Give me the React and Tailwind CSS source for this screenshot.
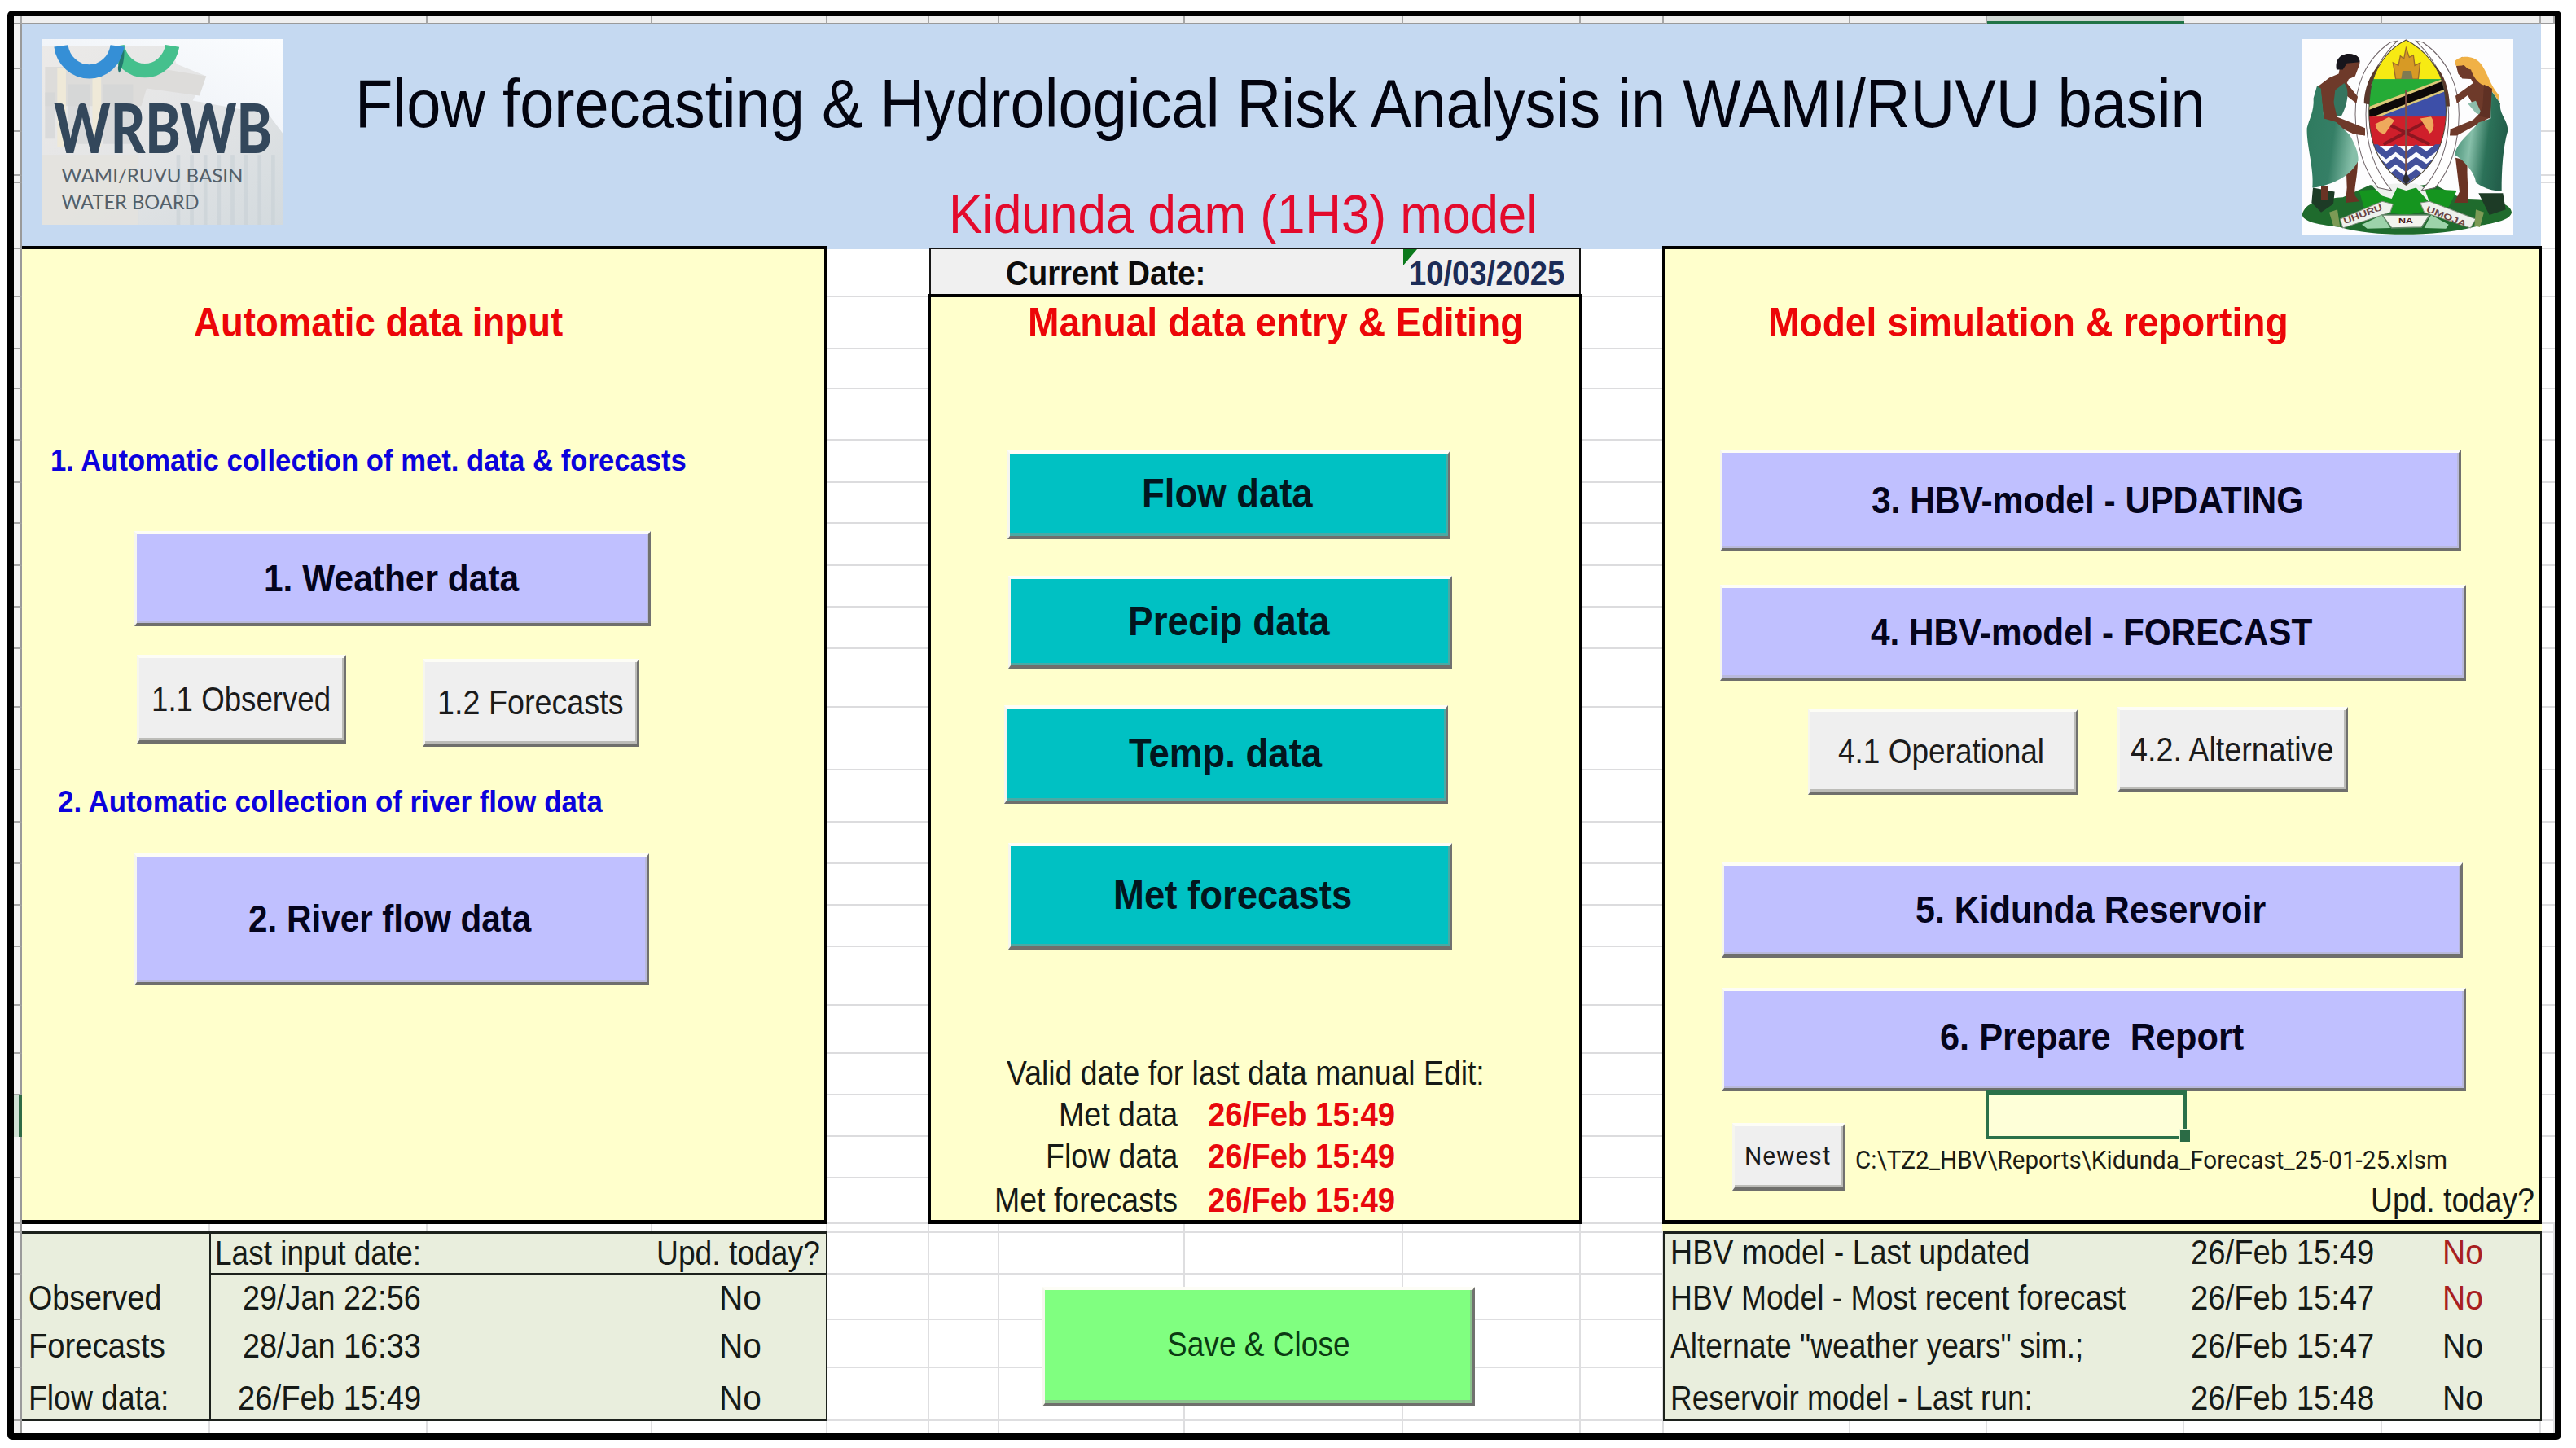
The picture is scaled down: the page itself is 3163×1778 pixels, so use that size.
import { useLayoutEffect, useRef, useState } from "react";

const COLS =
  "grid-cols-[10px_231px_267px_276px_215px_125px_86px_228px_268px_218px_102px_229px_168px_242px_243px_195px_17px]";
const ROWS =
  "grid-rows-[10px_55px_77px_54px_9px_81px_59px_64px_49px_63px_52px_50px_52px_51px_51px_72px_77px_64px_51px_51px_51px_72px_59px_51px_51px_51px_56px_11px_51px_56px_59px_65px_16px]";
const COL_COUNT = 17;
const ROW_COUNT = 33;
const SELECTED_COL = 13;
const SELECTED_ROW = 24;

function cellClass(row, col) {
  if (row === 0) {
    return col === SELECTED_COL
      ? "bg-[#cfd6d2] border-b-4 border-[#217346]"
      : "bg-[#efefef] border-b-2 border-r-2 border-b-[#9a9a9a] border-r-[#a6a6a6]";
  }
  if (col === 0) {
    return row === SELECTED_ROW
      ? "bg-[#cfe0d4] border-r-4 border-[#2f6b45]"
      : "bg-[#f3f3f3] border-b-2 border-r-2 border-b-[#a6a6a6] border-r-[#9a9a9a]";
  }
  return row >= 27
    ? "border-b-2 border-r-2 border-[#dedee0]"
    : "border-b-2 border-[#dcdcde]";
}

function Cells() {
  const cells = [];
  for (let r = 0; r < ROW_COUNT; r++)
    for (let c = 0; c < COL_COUNT; c++)
      cells.push(<div key={r + "-" + c} className={cellClass(r, c)} />);
  return <div className={"col-start-1 row-start-1 grid " + COLS + " " + ROWS}>{cells}</div>;
}

/* One line of text, stretched horizontally to the width of its box. */
function Fit({ className, children }) {
  const box = useRef(null);
  const line = useRef(null);
  const [scale, setScale] = useState(1);
  useLayoutEffect(() => {
    setScale(box.current.clientWidth / line.current.offsetWidth);
  }, []);
  return (
    <div ref={box} className={"shrink-0 whitespace-pre " + className}>
      <span ref={line} className="inline-block origin-left" style={{ transform: `scaleX(${scale})` }}>
        {children}
      </span>
    </div>
  );
}

const BEVEL =
  "shrink-0 flex items-center justify-center border-t-[4px] border-l-[3px] border-r-[3px] border-b-[4px] border-t-[#fdfdf6] border-l-[#f6f6ee] border-r-[#71716f] border-b-[#6f6f6c] ";
const PURPLE = BEVEL + "bg-[#c0c0ff] shadow-[inset_-2px_-3px_0_#b9b9dc] ";
const TEAL = BEVEL + "bg-[#00c1c3] shadow-[inset_-2px_-3px_0_#4ba9a4] ";
const GRAY = BEVEL + "bg-[#efefef] shadow-[inset_-2px_-3px_0_#bcbcb8] ";
const BOLD = "font-bold text-[46px] leading-[50px] h-[52px] text-[#04041c] ";
const TEALTXT = "font-bold text-[50px] leading-[50px] h-[53px] text-[#02161e] ";
const SMALL = "text-[43px] leading-[50px] h-[52px] text-[#1b1b1b] ";
const CELL = "text-[43px] leading-[50px] h-[52px] text-[#161a16] ";
const TITLE = "font-bold text-[50px] leading-[60px] h-[60px] text-[#ec0608] ";
const BLUE = "font-bold text-[36px] leading-[40px] h-[40px] text-[#0c02dc] ";

function WaterBoardLogo() {
  return (
    <svg className="mt-[18px] ml-[25px] h-[228px] w-[295px] shrink-0 overflow-visible" viewBox="65 53 887 685" preserveAspectRatio="none">
      <defs>
        <linearGradient id="wall" x1="0" y1="0" x2="1" y2="1">
          <stop offset="0" stopColor="#eceae8" />
          <stop offset="0.5" stopColor="#e4e5e6" />
          <stop offset="1" stopColor="#d3dade" />
        </linearGradient>
        <linearGradient id="sky" x1="0" y1="1" x2="1" y2="0">
          <stop offset="0" stopColor="#e9edf3" />
          <stop offset="1" stopColor="#fbfdff" />
        </linearGradient>
      </defs>
      <rect x="65" y="53" width="887" height="685" fill="url(#wall)" />
      <path d="M65 53H952V400L900 330L620 280L670 190L560 145L540 80H65Z" fill="url(#sky)" />
      <path d="M75 155H460L670 190L645 262L450 235L430 300H75Z" fill="#dddcda" />
      <path d="M120 160h32v290h-32zM250 160h32v290h-32z" fill="#efe9d8" />
      <path d="M75 250h38v170h-38zM160 220h80v220h-80zM290 220h110v220h-110z" fill="#d3d4d6" opacity=".7" />
      <path d="M65 480H420V738H65Z" fill="#e4e2dd" opacity=".8" />
      {[560, 610, 660, 710, 760, 810, 860, 910].map((x) => (
        <rect key={x} x={x} y="480" width="14" height="258" fill="#c8d0d6" opacity=".6" />
      ))}
      <path d="M342 78A103 110 0 0 0 545 78" fill="none" stroke="#45c08d" strokeWidth="52" />
      <path d="M134 78A105 110 0 0 0 342 78" fill="none" stroke="#358fd6" strokeWidth="52" />
      <path d="M367 90C369 125 362 152 350 178C338 165 345 140 367 90Z" fill="#23776f" />
      <text x="108" y="475" textLength="805" lengthAdjust="spacingAndGlyphs" fontFamily="Lato" fontWeight="900" fontSize="250" fill="#33475b">WRBWB</text>
      <text x="136" y="583" textLength="670" lengthAdjust="spacingAndGlyphs" fontFamily="Lato" fontSize="72" fill="#535f69">WAMI/RUVU BASIN</text>
      <text x="136" y="682" textLength="508" lengthAdjust="spacingAndGlyphs" fontFamily="Lato" fontSize="74" fill="#535f69">WATER BOARD</text>
    </svg>
  );
}

function CoatOfArms() {
  return (
    <svg className="mt-[18px] mr-[34px] h-[241px] w-[260px] shrink-0" viewBox="48 53 780 722" preserveAspectRatio="none">
      <defs>
        <clipPath id="shield">
          <path d="M433 56C500 90 560 160 574 240C590 340 575 430 530 500C500 545 465 570 433 590C400 570 365 540 335 490C295 420 290 330 302 240C315 160 365 90 433 56Z" />
        </clipPath>
        <linearGradient id="skirtL" x1="0" x2="1" y1="0" y2=".25">
          <stop offset="0" stopColor="#2e7a5e" />
          <stop offset=".6" stopColor="#357f66" />
          <stop offset="1" stopColor="#86bfa9" />
        </linearGradient>
        <linearGradient id="skirtR" x1="0" x2="1" y1="0" y2=".25">
          <stop offset="0" stopColor="#2f7d62" />
          <stop offset=".4" stopColor="#86bfa9" />
          <stop offset=".7" stopColor="#2c7259" />
          <stop offset="1" stopColor="#235f4b" />
        </linearGradient>
      </defs>
      <rect x="48" y="53" width="780" height="722" fill="#fdfdfe" />
      <path d="M50 700C60 650 130 640 200 635L300 590L433 600L530 585L640 640C740 640 815 650 822 690C815 725 740 730 680 745C560 775 330 785 190 745C120 735 60 730 50 700Z" fill="#1f6b2d" />
      <path d="M260 610L433 600L620 610L590 670L433 700L280 680Z" fill="#15951f" />
      <path d="M90 600L170 615L165 660L120 690L85 655ZM700 620L790 620L800 680L740 700Z" fill="#1d3b26" />
      <path d="M305 590L345 630L380 640L400 600L433 610L470 600L520 655L500 600L470 585H400Z" fill="#eef1ee" />
      {/* tusks */}
      <path d="M375 65C280 130 245 230 246 330C248 440 275 530 330 600L380 610C320 540 285 450 285 330C285 220 320 140 400 60Z" fill="#fff" stroke="#6f6468" strokeWidth="3" />
      <path d="M495 65C590 130 628 230 628 330C626 440 600 530 540 600L490 610C555 540 592 450 590 330C588 220 550 140 470 60Z" fill="#fff" stroke="#6f6468" strokeWidth="3" />
      <path d="M335 145C300 180 278 240 278 290L302 295L305 220ZM535 145C575 180 592 240 594 300L574 300L568 220Z" fill="#5a382b" />
      <g clipPath="url(#shield)">
        <rect x="280" y="50" width="310" height="150" fill="#f7ea13" />
        <path d="M395 200L385 140L405 150L412 115L425 125L433 85L445 120L460 112L465 150L485 140L478 200Z" fill="#d79a25" stroke="#9a6a2a" strokeWidth="4" />
        <path d="M415 200L420 170H452L458 200Z" fill="#7f7a52" />
        <rect x="280" y="200" width="310" height="140" fill="#25ab36" />
        <path d="M280 345L590 220V345Z" fill="#3d4fa8" />
        <path d="M280 308L575 197L590 240L300 352Z" fill="#dcc878" />
        <path d="M280 320L575 205L590 232L300 343Z" fill="#0c0808" />
        <rect x="280" y="338" width="310" height="108" fill="#cf1f2b" />
        <path d="M350 440L510 355M520 440L365 365" stroke="#8b1620" strokeWidth="12" />
        <path d="M320 365L370 340L390 352L355 402C335 400 322 385 320 365ZM485 345L525 338C540 360 538 390 520 400Z" fill="#efa95c" />
        <rect x="280" y="446" width="310" height="150" fill="#fafbff" />
        {[452, 498, 544].map((y) => (
          <path
            key={y}
            d={`M280 ${y}L325 ${y}L360 ${y + 28}L395 ${y + 2}L433 ${y + 30}L470 ${y + 2}L508 ${y + 28}L545 ${y}L590 ${y}`}
            fill="none"
            stroke="#42509b"
            strokeWidth="23"
          />
        ))}
        <path d="M433 240V590" stroke="#7c5147" strokeWidth="7" />
        <path d="M433 540L420 570L433 590L447 570Z" fill="#2d2d31" />
      </g>
      <path d="M433 56C500 90 560 160 574 240C590 340 575 430 530 500C500 545 465 570 433 590C400 570 365 540 335 490C295 420 290 330 302 240C315 160 365 90 433 56Z" fill="none" stroke="#4b4433" strokeWidth="3" />
      {/* left supporter */}
      <path d="M212 520L255 500C255 560 240 600 245 630L262 650L210 655L215 600ZM120 595h25v50h-25z" fill="#6a3324" />
      <path d="M190 150C180 120 200 108 225 108C255 110 265 125 262 145L245 190L222 200L215 215L255 265L250 290L200 250L185 300L180 340L282 380V408L240 402L130 350L118 250L105 230L150 195L185 180Z" fill="#6e3a2a" />
      <path d="M177 165C170 125 195 107 222 107C250 108 264 120 262 138L215 142L200 165Z" fill="#17151c" />
      <path d="M105 225L120 235L130 345L175 358L225 405C245 440 258 470 257 500C235 550 170 590 88 600C95 530 65 440 68 380C75 350 95 320 92 270Z" fill="url(#skirtL)" />
      <path d="M172 240L205 215C225 235 220 290 195 335L160 338Z" fill="#35755f" />
      <path d="M120 235C125 290 130 320 132 345L165 350L240 402L280 407L275 380L180 345L160 260L150 215Z" fill="#6e3a2a" />
      {/* right supporter */}
      <path d="M615 490L660 500C655 560 665 600 660 655H610L630 615Z" fill="#6a3324" />
      <path d="M615 140L640 118L690 150L750 235L745 340L620 408L594 408L596 385L680 350L700 330L660 260L620 290L615 262L680 215L672 200L640 198L625 180Z" fill="#6e3a2a" />
      <path d="M613 135C630 112 680 112 705 140C735 175 735 210 775 260L778 285L735 225C700 225 680 190 672 165C655 165 650 145 640 150L618 152Z" fill="#f0b146" />
      <path d="M745 240L780 290C775 330 808 350 808 390C790 450 785 530 785 612C750 612 715 600 690 580C690 550 640 490 612 480C620 430 670 400 700 360L745 345Z" fill="url(#skirtR)" />
      <path d="M660 290L690 280L715 335L690 325Z" fill="#8dbdab" />
      <path d="M720 220L750 235L742 345L700 335L715 300Z" fill="#5f3124" />
      {/* banner */}
      <path d="M190 715L345 650L385 660L375 690L200 748Z" fill="#eef1ec" stroke="#7e8d7c" strokeWidth="3" />
      <path d="M485 655L520 650L690 715L670 748L500 690Z" fill="#eef1ec" stroke="#7e8d7c" strokeWidth="3" />
      <path d="M270 735L345 700L375 748L290 750ZM590 735L525 700L500 748L580 750Z" fill="#9dd3aa" />
      <path d="M345 700L520 700L490 745L380 748Z" fill="#f3f4ee" stroke="#65876a" strokeWidth="4" />
      <path d="M150 690L180 680L190 745L165 740ZM690 680L720 690L705 745L685 740Z" fill="#7c9a55" />
      <text x="405" y="731" textLength="54" lengthAdjust="spacingAndGlyphs" fontFamily="Liberation Sans" fontWeight="700" fontSize="26" fill="#4a1c1c">NA</text>
      <text transform="rotate(-21 205 735)" x="208" y="735" textLength="150" lengthAdjust="spacingAndGlyphs" fontFamily="Liberation Sans" fontWeight="700" fontSize="32" fill="#6a4343">UHURU</text>
      <text transform="rotate(22 500 680)" x="508" y="684" textLength="155" lengthAdjust="spacingAndGlyphs" fontFamily="Liberation Sans" fontWeight="700" fontSize="32" fill="#6a4343">UMOJA</text>
    </svg>
  );
}

function Header() {
  return (
    <header className="flex h-[276px] w-[3093px] shrink-0 bg-[#c5d9f1]">
      <WaterBoardLogo />
      <div className="ml-[89px] flex grow flex-col">
        <Fit className="mt-[53px] h-[90px] w-[2272px] text-[83px] leading-[90px] text-[#03040f]">
          Flow forecasting &amp; Hydrological Risk Analysis in WAMI/RUVU basin
        </Fit>
        <Fit className="mt-[50px] ml-[729px] h-[80px] w-[723px] text-[67px] leading-[80px] text-[#e30a2c]">
          Kidunda dam (1H3) model
        </Fit>
      </div>
      <CoatOfArms />
    </header>
  );
}

function AutomaticPanel() {
  return (
    <section className="h-[1201px] border-t-[4px] border-r-[4px] border-b-[5px] border-black bg-[#ffffcc]">
      <Fit className={TITLE + "mt-[60px] ml-[211px] w-[453px]"}>Automatic data input</Fit>
      <Fit className={BLUE + "mt-[120px] ml-[35px] w-[781px]"}>1. Automatic collection of met. data &amp; forecasts</Fit>
      <div className={PURPLE + "mt-[66px] ml-[138px] h-[117px] w-[634px] pr-[4px]"}>
        <Fit className={BOLD + "w-[313px]"}>1. Weather data</Fit>
      </div>
      <div className="mt-[35px] ml-[141px] flex h-[113px] items-start gap-[94px]">
        <div className={GRAY + "h-[109px] w-[257px] pr-[2px]"}>
          <Fit className={SMALL + "w-[220px]"}>1.1 Observed</Fit>
        </div>
        <div className={GRAY + "mt-[5px] h-[108px] w-[266px] pr-[2px]"}>
          <Fit className={SMALL + "w-[229px]"}>1.2 Forecasts</Fit>
        </div>
      </div>
      <Fit className={BLUE + "mt-[48px] ml-[44px] w-[669px]"}>2. Automatic collection of river flow data</Fit>
      <div className={PURPLE + "mt-[43px] ml-[138px] h-[162px] w-[632px] pr-[6px]"}>
        <Fit className={BOLD + "w-[347px]"}>2. River flow data</Fit>
      </div>
    </section>
  );
}

function InputTable() {
  const rows = [
    ["29/Jan 22:56", "h-[55px]", "w-[219px]"],
    ["28/Jan 16:33", "h-[59px]", "w-[219px]"],
    ["26/Feb 15:49", "h-[64px]", "w-[225px]"],
  ];
  return (
    <section className="mt-[9px] flex h-[233px] border-t-[3px] border-r-2 border-b-2 border-[#1c211c] bg-[#e9eedd]">
      <div className="flex w-[232px] shrink-0 flex-col border-r-2 border-[#1c211c] pl-[8px]">
        <div className="h-[50px]" />
        <div className="flex h-[55px] items-end"><Fit className={CELL + "w-[163px]"}>Observed</Fit></div>
        <div className="flex h-[59px] items-end"><Fit className={CELL + "w-[168px]"}>Forecasts</Fit></div>
        <div className="flex h-[64px] items-end"><Fit className={CELL + "w-[172px]"}>Flow data:</Fit></div>
      </div>
      <div className="flex grow flex-col">
        <div className="flex h-[50px] items-center justify-between border-b-2 border-[#1c211c] pr-[7px] pl-[5px]">
          <Fit className={CELL + "w-[253px]"}>Last input date:</Fit>
          <Fit className={CELL + "w-[201px]"}>Upd. today?</Fit>
        </div>
        {rows.map(([date, h, w]) => (
          <div key={date} className={"flex items-end " + h}>
            <div className="flex w-[258px] justify-end"><Fit className={CELL + w}>{date}</Fit></div>
            <Fit className={CELL + "ml-[366px] w-[52px]"}>No</Fit>
          </div>
        ))}
      </div>
    </section>
  );
}

function ManualColumn() {
  const edits = [
    ["Met data", "h-[50px]", "w-[146px]"],
    ["Flow data", "h-[52px]", "w-[162px]"],
    ["Met forecasts", "mt-[4px] h-[48px]", "w-[225px]"],
  ];
  return (
    <div className="mt-[2px] ml-[123px] flex w-[804px] shrink-0 flex-col">
      <div className="relative mx-[2px] flex h-[57px] items-center justify-between border-t-2 border-r-2 border-l-2 border-[#161616] bg-[#f0f0f0] pt-[4px] pr-[18px] pl-[92px]">
        <svg className="absolute top-0 left-[580px] h-[20px] w-[17px]" viewBox="0 0 17 20">
          <path d="M0 0H17L0 20Z" fill="#0b7a1c" />
        </svg>
        <Fit className="h-[50px] w-[245px] text-[42px] leading-[50px] font-bold text-[#0c0c0c]">Current Date:</Fit>
        <Fit className="h-[50px] w-[191px] text-[42px] leading-[50px] font-bold text-[#1c2c57]">10/03/2025</Fit>
      </div>
      <section className="h-[1142px] border-[4px] border-b-[5px] border-black bg-[#ffffcc]">
        <Fit className={TITLE + "mt-[1px] ml-[119px] w-[608px]"}>Manual data entry &amp; Editing</Fit>
        <div className={TEAL + "mt-[127px] ml-[94px] h-[109px] w-[544px] pr-[4px]"}>
          <Fit className={TEALTXT + "w-[210px]"}>Flow data</Fit>
        </div>
        <div className={TEAL + "mt-[45px] ml-[95px] h-[114px] w-[545px] pr-[3px]"}>
          <Fit className={TEALTXT + "w-[248px]"}>Precip data</Fit>
        </div>
        <div className={TEAL + "mt-[45px] ml-[90px] h-[121px] w-[545px] pr-[3px]"}>
          <Fit className={TEALTXT + "w-[237px]"}>Temp. data</Fit>
        </div>
        <div className={TEAL + "mt-[48px] ml-[95px] h-[131px] w-[545px] pl-[6px]"}>
          <Fit className={TEALTXT + "w-[293px]"}>Met forecasts</Fit>
        </div>
        <Fit className={CELL + "mt-[126px] ml-[93px] w-[587px]"}>Valid date for last data manual Edit:</Fit>
        {edits.map(([label, h, w]) => (
          <div key={label} className={"flex items-center " + h}>
            <div className="flex w-[303px] justify-end"><Fit className={CELL + w}>{label}</Fit></div>
            <Fit className="ml-[37px] h-[52px] w-[230px] text-[43px] leading-[50px] font-bold text-[#e8080c]">26/Feb 15:49</Fit>
          </div>
        ))}
      </section>
      <div className={BEVEL + "mt-[77px] ml-[141px] h-[147px] w-[531px] bg-[#80ff80] pb-[7px] shadow-[inset_-3px_-4px_0_#8ac48c]"}>
        <Fit className="h-[50px] w-[225px] text-[43px] leading-[50px] text-[#0b3a12]">Save &amp; Close</Fit>
      </div>
    </div>
  );
}

function ModelPanel() {
  return (
    <section className="relative h-[1201px] border-[4px] border-b-[5px] border-black bg-[#ffffcc]">
      <Fit className={TITLE + "mt-[60px] ml-[126px] w-[639px]"}>Model simulation &amp; reporting</Fit>
      <div className={PURPLE + "mt-[126px] ml-[67px] h-[125px] w-[910px] pr-[8px]"}>
        <Fit className={BOLD + "w-[530px]"}>3. HBV-model - UPDATING</Fit>
      </div>
      <div className={PURPLE + "mt-[41px] ml-[67px] h-[118px] w-[916px] pr-[5px]"}>
        <Fit className={BOLD + "w-[542px]"}>4. HBV-model - FORECAST</Fit>
      </div>
      <div className="mt-[32px] ml-[175px] flex h-[108px] items-start gap-[48px]">
        <div className={GRAY + "mt-[2px] h-[106px] w-[332px] pr-[6px]"}>
          <Fit className={SMALL + "w-[253px]"}>4.1 Operational</Fit>
        </div>
        <div className={GRAY + "h-[105px] w-[283px] pr-[2px]"}>
          <Fit className={SMALL + "w-[249px]"}>4.2. Alternative</Fit>
        </div>
      </div>
      <div className={PURPLE + "mt-[83px] ml-[69px] h-[117px] w-[910px] pr-[4px]"}>
        <Fit className={BOLD + "w-[430px]"}>5. Kidunda Reservoir</Fit>
      </div>
      <div className={PURPLE + "mt-[37px] ml-[69px] h-[127px] w-[914px] pr-[5px] pb-[5px]"}>
        <Fit className={BOLD + "w-[373px]"}>6. Prepare  Report</Fit>
      </div>
      <div className="absolute top-[1032px] left-[393px] h-[61px] w-[247px] border-[4px] border-t-[6px] border-[#2b7149] bg-[#feffd8]">
        <div className="absolute right-[-8px] bottom-[-7px] h-[16px] w-[14px] border-t-2 border-l-2 border-[#eaf7d6] bg-[#2b6b45]" />
      </div>
      <div className="mt-[39px] ml-[82px] flex h-[83px] items-start">
        <div className={GRAY + "h-[83px] w-[139px] pr-[3px]"}>
          <Fit className="h-[42px] w-[106px] font-[Roboto,sans-serif] text-[31px] leading-[40px] tracking-[1px] text-[#1b1b1b]">Newest</Fit>
        </div>
        <Fit className="mt-[20px] ml-[12px] h-[50px] w-[727px] font-[Roboto,sans-serif] text-[32px] leading-[50px] text-[#1c1c14]">
          {"C:\\TZ2_HBV\\Reports\\Kidunda_Forecast_25-01-25.xlsm"}
        </Fit>
      </div>
      <div className="-mt-[8px] mr-[5px] flex h-[40px] items-center justify-end">
        <Fit className={CELL + "w-[201px]"}>Upd. today?</Fit>
      </div>
    </section>
  );
}

function ModelTable() {
  const rows = [
    ["HBV model - Last updated", "w-[441px]", "26/Feb 15:49", "h-[49px]", "text-[#a8201f] "],
    ["HBV Model - Most recent forecast", "w-[559px]", "26/Feb 15:47", "h-[56px]", "text-[#a8201f] "],
    ['Alternate "weather years" sim.;', "w-[507px]", "26/Feb 15:47", "h-[59px]", "text-[#161a16] "],
    ["Reservoir model - Last run:", "w-[445px]", "26/Feb 15:48", "h-[64px]", "text-[#161a16] "],
  ];
  return (
    <section className="ml-[1px] flex h-[233px] flex-col border-2 border-t-[3px] border-[#1c211c] bg-[#e9eedd]">
      {rows.map(([label, w, date, h, color]) => (
        <div key={label} className={"flex items-end pl-[7px] " + h}>
          <div className="w-[639px] shrink-0"><Fit className={CELL + w}>{label}</Fit></div>
          <Fit className={CELL + "w-[225px]"}>{date}</Fit>
          <Fit className={"ml-[84px] h-[52px] w-[50px] text-[43px] leading-[50px] " + color}>No</Fit>
        </div>
      ))}
    </section>
  );
}

export default function App() {
  return (
    <div className="h-[1778px] w-[3163px] overflow-hidden bg-white pt-[13px] pl-[9px] font-['Liberation_Sans',Arial,sans-serif]">
      <main className="grid h-[1755px] w-[3136px] overflow-hidden rounded-[6px] border-t-[7px] border-r-[8px] border-b-[8px] border-l-[8px] border-black bg-white">
        <Cells />
        <div className="z-10 col-start-1 row-start-1 flex flex-col pt-[10px] pl-[10px]">
          <Header />
          <div className="-mt-[4px] flex">
            <div className="flex w-[989px] shrink-0 flex-col">
              <AutomaticPanel />
              <InputTable />
            </div>
            <ManualColumn />
            <div className="ml-[98px] flex w-[1080px] shrink-0 flex-col">
              <ModelPanel />
              <div className="h-[9px] bg-[#ffffcc]" />
              <ModelTable />
            </div>
          </div>
        </div>
      </main>
    </div>
  );
}
